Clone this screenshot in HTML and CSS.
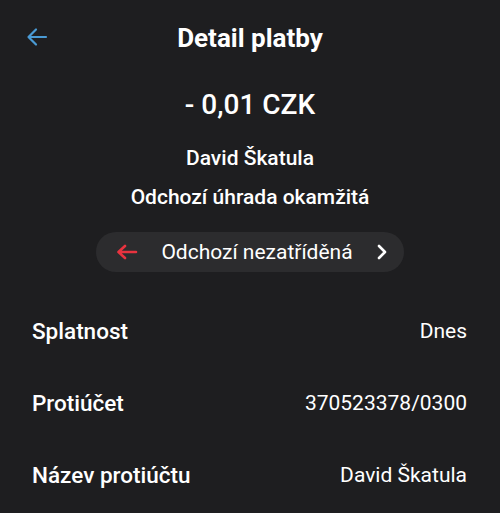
FILE: index.html
```html
<!DOCTYPE html>
<html lang="cs">
<head>
    <meta charset="UTF-8">
    <meta name="viewport" content="width=device-width, initial-scale=1.0">
    <title>Detail platby</title>
    <link rel="stylesheet" href="styles.css">
</head>
<body>

    <div class="header">
        <svg class="back" width="24" height="24" viewBox="0 0 24 24">
            <path d="M21 12H4M11 4.5L3.5 12L11 19.5" fill="none" stroke="#4a9ad4" stroke-width="2.2" stroke-linecap="round" stroke-linejoin="round"/>
        </svg>
        <h1>Detail platby</h1>
    </div>

    <div class="summary">
        <div class="amount">- 0,01 CZK</div>
        <div class="name">David Škatula</div>
        <div class="type">Odchozí úhrada okamžitá</div>
        <div class="category">
            <svg width="22" height="16" viewBox="0 0 22 16">
                <path d="M20 8H3M9 2L2.5 8L9 14" fill="none" stroke="#e8333f" stroke-width="2.6" stroke-linecap="round" stroke-linejoin="round"/>
            </svg>
            <span>Odchozí nezatříděná</span>
            <svg width="12" height="16" viewBox="0 0 12 16">
                <path d="M3 2L9 8L3 14" fill="none" stroke="#ffffff" stroke-width="2.6" stroke-linecap="round" stroke-linejoin="round"/>
            </svg>
        </div>
    </div>

    <div class="rows">
        <div class="row">
            <span class="label">Splatnost</span>
            <span class="value">Dnes</span>
        </div>
        <div class="row">
            <span class="label">Protiúčet</span>
            <span class="value">370523378/0300</span>
        </div>
        <div class="row">
            <span class="label">Název protiúčtu</span>
            <span class="value">David Škatula</span>
        </div>
    </div>

</body>
</html>
```

FILE: styles.css
```css
body {
    font-family: Roboto, "Noto Sans", sans-serif;
    background-color: #1e1e20;
    color: #ffffff;
    margin: 0;
    width: 500px;
    height: 513px;
    overflow: hidden;
}
.header {
    position: relative;
    height: 76px;
    display: flex;
    justify-content: center;
    align-items: center;
}
.back {
    position: absolute;
    left: 25px;
    top: 25px;
}
h1 {
    margin: 0;
    font-size: 26px;
    font-weight: 700;
}
.summary {
    display: flex;
    flex-direction: column;
    align-items: center;
}
.amount {
    font-size: 28px;
    line-height: 32px;
    font-weight: 500;
    margin-top: 13px;
}
.name {
    font-size: 21px;
    line-height: 24px;
    font-weight: 500;
    margin-top: 25px;
}
.type {
    font-size: 21px;
    line-height: 24px;
    font-weight: 500;
    margin-top: 15px;
}
.category {
    display: flex;
    align-items: center;
    height: 40px;
    width: 308px;
    box-sizing: border-box;
    padding: 0 16px 0 20px;
    margin-top: 23px;
    background-color: #2c2c2e;
    border-radius: 20px;
}
.category span {
    flex: 1;
    font-size: 21px;
    text-align: center;
}
.rows {
    padding: 23px 33px 0 32px;
}
.row {
    display: flex;
    justify-content: space-between;
    align-items: center;
    height: 72px;
}
.label {
    font-size: 22.5px;
    font-weight: 500;
}
.value {
    font-size: 21px;
}
```
